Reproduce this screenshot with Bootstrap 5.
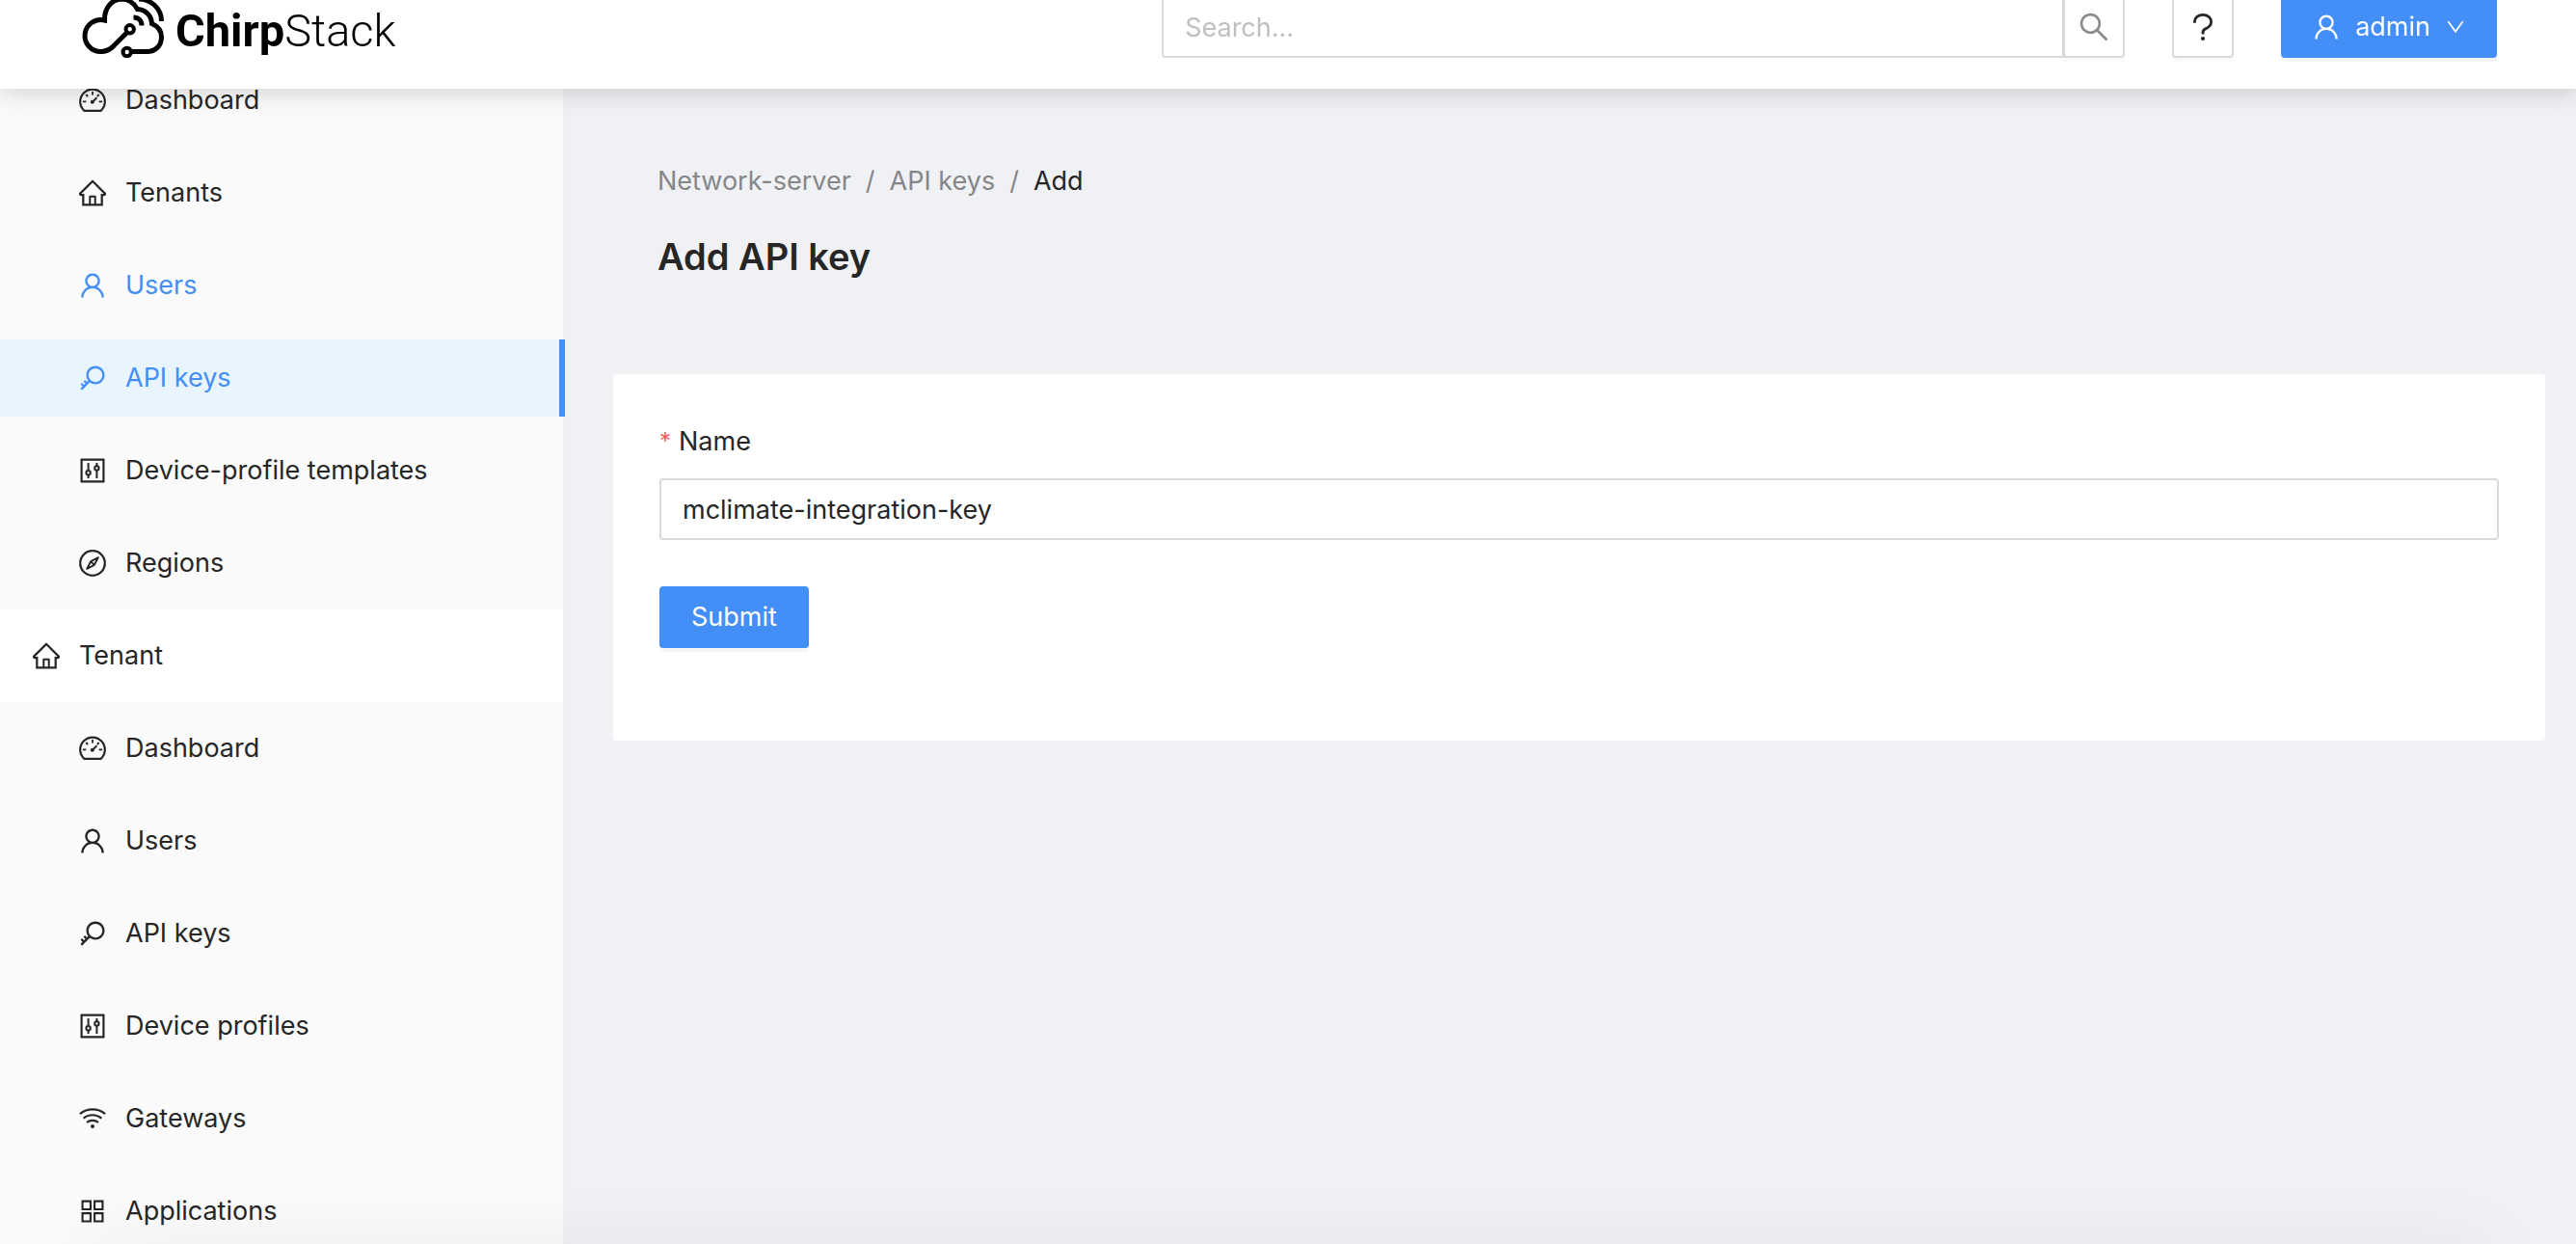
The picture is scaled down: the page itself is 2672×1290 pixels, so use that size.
<!DOCTYPE html>
<html lang="en">
<head>
<meta charset="utf-8">
<meta name="viewport" content="width=device-width, initial-scale=1">
<title>ChirpStack</title>
<link href="https://cdn.jsdelivr.net/npm/bootstrap@5.3.0/dist/css/bootstrap.min.css" rel="stylesheet">
<style>
  :root { --brand: #448ef7; --ink: #262626; --line: #d9d9d9; }
  body { font-family: Inter, "Liberation Sans", sans-serif; font-size: 27px; line-height: 44px; color: var(--ink); background: #f0f1f5; }
  svg { display: block; flex: none; }
  .ico { width: 28px; height: 28px; fill: currentColor; }
  .ico-lg { width: 32px; height: 32px; }
  .ico-sm { width: 20px; height: 20px; }
  .topbar { height: 92px; padding: 0 82px 32px; background: #fff; box-shadow: 0 4px 24px rgba(0,0,0,.16); }
  .brand { color: #000; font-family: Roboto, "Liberation Sans", sans-serif; font-size: 47px; line-height: 56px; font-weight: 300; gap: 12px; }
  .brand b { font-weight: 700; }
  .brand-cloud { width: 88px; height: 64px; }
  .tools { gap: 49px; }
  .search-group { width: 999px; }
  .form-control, .form-control:focus { height: 64px; padding: 0 22px; font-size: 27px; line-height: 44px; color: var(--ink); border: 2px solid var(--line); border-radius: 4px; box-shadow: none; }
  .form-control::placeholder { color: #bfbfbf; }
  .btn { height: 64px; font-size: 27px; line-height: 44px; padding: 0 31px; border-width: 2px; border-radius: 4px; box-shadow: 0 4px 0 rgba(0,0,0,.04); }
  .btn-square { width: 64px; padding: 0; background: #fff; border-color: var(--line); color: var(--ink); box-shadow: 0 4px 0 rgba(0,0,0,.02); }
  .btn-find { color: #8c8c8c; }
  .btn-primary { --bs-btn-bg: var(--brand); --bs-btn-border-color: var(--brand); }
  .layout { padding-top: 56px; }
  .sidebar { width: 586px; background: #fafafa; border-right: 2px solid #f0f0f0; flex: none; }
  .sidebar .nav-link { height: 80px; margin: 8px 0; padding: 0 32px 0 82px; gap: 20px; flex: none; color: var(--ink); }
  .sidebar .nav-link.hovered { color: var(--brand); }
  .sidebar .nav-link.active { color: var(--brand); background: #e8f5fe; margin-right: -2px; border-right: 6px solid var(--brand); }
  .sidebar .group-row { background: #fff; display: flow-root; flex: none; }
  .sidebar .group-row .nav-link { padding-left: 34px; }
  .content { padding: 110px 32px 0 50px; }
  .page-head { padding: 0 46px; }
  .breadcrumb { --bs-breadcrumb-item-padding-x: 15px; --bs-breadcrumb-divider-color: #858688; --bs-breadcrumb-item-active-color: var(--ink); font-size: 27px; }
  .breadcrumb a { color: #858688; }
  h1 { font-size: 38px; line-height: 64px; font-weight: 600; margin: 24px 0 90px; }
  .panel { border: 0; border-radius: 4px; padding: 48px 48px 96px; }
  .form-label { margin-bottom: 16px; gap: 8px; }
  .required-star { color: #f0625f; font-size: 24px; }
  .bottom-shade { height: 0; margin: 0 130px; box-shadow: 0 40px 80px 40px rgba(0,0,0,.05); pointer-events: none; }
</style>
</head>
<body class="overflow-hidden">

<svg class="d-none" aria-hidden="true">
  <symbol id="i-home" viewBox="64 64 896 896"><path d="M946.5 505L560.1 118.8l-25.9-25.9a31.5 31.5 0 00-44.4 0L77.5 505a63.9 63.9 0 00-18.8 46c.4 35.2 29.7 63.3 64.9 63.3h42.5V940h691.8V614.3h43.4c17.1 0 33.2-6.7 45.3-18.8a63.6 63.6 0 0018.7-45.3c0-17-6.7-33.1-18.8-45.2zM568 868H456V664h112v204zm217.9-325.7V868H632V640c0-22.1-17.9-40-40-40H432c-22.1 0-40 17.9-40 40v228H238.1V542.3h-96l370-369.7 23.1 23.1L882 542.3h-96.1z"/></symbol>
  <symbol id="i-user" viewBox="64 64 896 896"><path d="M858.5 763.6a374 374 0 00-80.6-119.5 375.63 375.63 0 00-119.5-80.6c-.4-.2-.8-.3-1.2-.5C719.5 518 760 444.7 760 362c0-137-111-248-248-248S264 225 264 362c0 82.7 40.5 156 102.8 201.1-.4.2-.8.3-1.2.5-44.8 18.9-85 46-119.5 80.6a375.63 375.63 0 00-80.6 119.5A371.7 371.7 0 00136 901.8a8 8 0 008 8.2h60c4.4 0 7.9-3.5 8-7.8 2-77.2 33-149.5 87.8-204.3 56.7-56.7 132-87.9 212.2-87.9s155.5 31.2 212.2 87.9C779 752.7 810 825 812 902.2c.1 4.4 3.6 7.8 8 7.8h60a8 8 0 008-8.2c-1-47.8-10.9-94.3-29.5-138.2zM512 534c-45.9 0-89.1-17.9-121.6-50.4S340 407.9 340 362c0-45.9 17.9-89.1 50.4-121.6S466.1 190 512 190s89.1 17.9 121.6 50.4S684 316.1 684 362c0 45.9-17.9 89.1-50.4 121.6S557.9 534 512 534z"/></symbol>
  <symbol id="i-key" viewBox="64 64 896 896"><path d="M608 112c-167.9 0-304 136.1-304 304 0 70.3 23.9 135 63.9 186.5l-41.1 41.1-62.3-62.3a8.15 8.15 0 00-11.4 0l-39.8 39.8a8.15 8.15 0 000 11.4l62.3 62.3-44.9 44.9-62.3-62.3a8.15 8.15 0 00-11.4 0l-39.8 39.8a8.15 8.15 0 000 11.4l62.3 62.3-65.3 65.3a8.03 8.03 0 000 11.3l42.3 42.3c3.1 3.1 8.2 3.1 11.3 0l253.6-253.6A304.06 304.06 0 00608 720c167.9 0 304-136.1 304-304S775.9 112 608 112zm161.2 465.2C726.2 620.3 668.9 644 608 644c-60.9 0-118.2-23.7-161.2-66.8-43.1-43-66.8-100.3-66.8-161.2 0-60.9 23.7-118.2 66.8-161.2 43-43.1 100.3-66.8 161.2-66.8 60.9 0 118.2 23.7 161.2 66.8 43.1 43 66.8 100.3 66.8 161.2 0 60.9-23.7 118.2-66.8 161.2z"/></symbol>
  <symbol id="i-apps" viewBox="64 64 896 896"><path fill="none" stroke="currentColor" stroke-width="68" d="M178 178h268v268H178zM578 178h268v268H578zM178 578h268v268H178zM578 578h268v268H578z"/></symbol>
  <symbol id="i-search" viewBox="64 64 896 896"><path d="M909.6 854.5L649.9 594.8C690.2 542.7 712 479 712 412c0-80.2-31.3-155.4-87.9-212.1-56.6-56.7-132-87.9-212.1-87.9s-155.5 31.3-212.1 87.9C143.2 256.5 112 331.8 112 412c0 80.1 31.3 155.5 87.9 212.1C256.5 680.8 331.8 712 412 712c67 0 130.6-21.8 182.7-62l259.7 259.6a8.2 8.2 0 0011.6 0l43.6-43.5a8.2 8.2 0 000-11.6zM570.4 570.4C528 612.7 471.8 636 412 636s-116-23.3-158.4-65.6C211.3 528 188 471.8 188 412s23.3-116.1 65.6-158.4C296 211.3 352.2 188 412 188s116.1 23.2 158.4 65.6S636 352.2 636 412s-23.3 116.1-65.6 158.4z"/></symbol>
  <symbol id="i-down" viewBox="64 64 896 896"><path d="M884 256h-75c-5.1 0-9.9 2.5-12.9 6.6L512 654.2 227.9 262.6c-3-4.1-7.8-6.6-12.9-6.6h-75c-6.5 0-10.3 7.4-6.5 12.7l352.6 486.1c12.8 17.6 39 17.6 51.7 0l352.6-486.1c3.9-5.3.1-12.7-6.4-12.7z"/></symbol>
  <symbol id="i-help" viewBox="0 0 32 32"><path fill="none" stroke="currentColor" stroke-width="2.8" d="M7.4 11.8V10.6C7.4 6.4 11.2 3.4 16 3.4s8.6 3 8.6 7.2c0 3.2-2 5.4-5 6.8-2.4 1-3.6 2-3.6 4.2v2"/><circle cx="16" cy="28" r="2.1"/></symbol>
  <symbol id="i-dash" viewBox="0 0 28 28"><path fill="none" stroke="currentColor" stroke-width="2.2" stroke-linejoin="round" d="M5.4 24.9A12.8 12.8 0 1 1 22.6 24.9z"/><path fill="none" stroke="currentColor" stroke-width="1.8" d="M14 5v3.4M7.2 8l2 2M3.9 15.3h3.4M20.7 15.3h3.4M18.8 10l2-2"/><path fill="none" stroke="currentColor" stroke-width="2" d="M14 15.6l4.4-4.4"/><circle cx="13.8" cy="15.8" r="2"/></symbol>
  <symbol id="i-control" viewBox="0 0 28 28"><path fill="none" stroke="currentColor" stroke-width="2.2" d="M2.6 2.6h22.8v22.8H2.6z"/><path fill="none" stroke="currentColor" stroke-width="2" d="M9.6 6v7.7M9.6 18.5V22M18.4 6v2.9M18.4 13.6V22"/><circle cx="9.6" cy="16.2" r="2.2" fill="none" stroke="currentColor" stroke-width="2"/><circle cx="18.4" cy="11.4" r="2.2" fill="none" stroke="currentColor" stroke-width="2"/></symbol>
  <symbol id="i-compass" viewBox="0 0 28 28"><circle cx="14" cy="14" r="12.8" fill="none" stroke="currentColor" stroke-width="2.3"/><path fill="none" stroke="currentColor" stroke-width="1.9" stroke-linejoin="round" d="M19.8 8.2l-7.6 4-4 7.6 7.6-4zM12.2 12.2l3.6 3.6"/></symbol>
  <symbol id="i-wifi" viewBox="0 0 28 28"><path fill="none" stroke="currentColor" stroke-width="2.2" d="M.9 9.1a20.5 20.5 0 0 1 26.2 0M4.6 13.7a14.6 14.6 0 0 1 18.8 0M8 18a9.4 9.4 0 0 1 12 0"/><circle cx="14" cy="22" r="2"/></symbol>
</svg>

<header class="topbar fixed-top d-flex justify-content-between align-items-end">
  <a class="brand d-flex align-items-end text-decoration-none" href="#">
    <svg class="brand-cloud" viewBox="0 -4 88 64" fill="none" stroke="#000" stroke-width="5" aria-hidden="true">
      <path d="M50 33.500L35 48.500C31 52 27.500 53.500 23 53.500a16.500 16.500 0 1 1 3.500-32.500C26 8 34-.5 44-1c7 0 13 4 16.500 10.500C69 10 75 16 75.500 24.500c6 2.500 10 7.500 10 14 0 9-6.500 15-15 15H54"/>
      <path d="M62-1c12 0 23.500 9 23.500 23M56.500 18c5 0 8.500 3.500 8.500 8.500"/>
      <circle cx="52.700" cy="30.300" r="4.200" stroke-width="4"/><circle cx="49.700" cy="54" r="4.200" stroke-width="4"/>
    </svg>
    <span><b>Chirp</b>Stack</span>
  </a>
  <div class="tools d-flex align-items-center">
    <form class="input-group search-group" role="search">
      <input class="form-control" type="search" placeholder="Search..." aria-label="Search">
      <button class="btn btn-square btn-find d-flex align-items-center justify-content-center" type="button" aria-label="Run search"><svg class="ico ico-lg"><use href="#i-search"/></svg></button>
    </form>
    <button class="btn btn-square d-flex align-items-center justify-content-center" type="button" aria-label="Help"><svg class="ico ico-lg"><use href="#i-help"/></svg></button>
    <button class="btn btn-primary d-flex align-items-center gap-3" type="button"><svg class="ico"><use href="#i-user"/></svg>admin<svg class="ico ico-sm"><use href="#i-down"/></svg></button>
  </div>
</header>

<div class="layout d-flex vh-100">
  <nav class="sidebar nav flex-column flex-nowrap" aria-label="Main">
    <a class="nav-link d-flex align-items-center" href="#"><svg class="ico"><use href="#i-dash"/></svg>Dashboard</a>
    <a class="nav-link d-flex align-items-center" href="#"><svg class="ico"><use href="#i-home"/></svg>Tenants</a>
    <a class="nav-link hovered d-flex align-items-center" href="#"><svg class="ico"><use href="#i-user"/></svg>Users</a>
    <a class="nav-link active d-flex align-items-center" href="#" aria-current="page"><svg class="ico"><use href="#i-key"/></svg>API keys</a>
    <a class="nav-link d-flex align-items-center" href="#"><svg class="ico"><use href="#i-control"/></svg>Device-profile templates</a>
    <a class="nav-link d-flex align-items-center" href="#"><svg class="ico"><use href="#i-compass"/></svg>Regions</a>
    <div class="group-row"><a class="nav-link d-flex align-items-center" href="#"><svg class="ico"><use href="#i-home"/></svg>Tenant</a></div>
    <a class="nav-link d-flex align-items-center" href="#"><svg class="ico"><use href="#i-dash"/></svg>Dashboard</a>
    <a class="nav-link d-flex align-items-center" href="#"><svg class="ico"><use href="#i-user"/></svg>Users</a>
    <a class="nav-link d-flex align-items-center" href="#"><svg class="ico"><use href="#i-key"/></svg>API keys</a>
    <a class="nav-link d-flex align-items-center" href="#"><svg class="ico"><use href="#i-control"/></svg>Device profiles</a>
    <a class="nav-link d-flex align-items-center" href="#"><svg class="ico"><use href="#i-wifi"/></svg>Gateways</a>
    <a class="nav-link d-flex align-items-center" href="#"><svg class="ico"><use href="#i-apps"/></svg>Applications</a>
  </nav>

  <main class="content flex-grow-1">
    <div class="page-head">
      <nav aria-label="breadcrumb">
        <ol class="breadcrumb mb-0">
          <li class="breadcrumb-item"><a class="text-decoration-none" href="#">Network-server</a></li>
          <li class="breadcrumb-item"><a class="text-decoration-none" href="#">API keys</a></li>
          <li class="breadcrumb-item active" aria-current="page">Add</li>
        </ol>
      </nav>
      <h1>Add API key</h1>
    </div>
    <form class="panel card">
      <label class="form-label d-flex" for="key-name"><span class="required-star">*</span>Name</label>
      <input class="form-control mb-5" id="key-name" type="text" value="mclimate-integration-key" required>
      <button class="btn btn-primary align-self-start" type="button">Submit</button>
    </form>
  </main>
</div>
<div class="bottom-shade fixed-bottom"></div>

<script src="https://cdn.jsdelivr.net/npm/bootstrap@5.3.0/dist/js/bootstrap.bundle.min.js"></script>
</body>
</html>
